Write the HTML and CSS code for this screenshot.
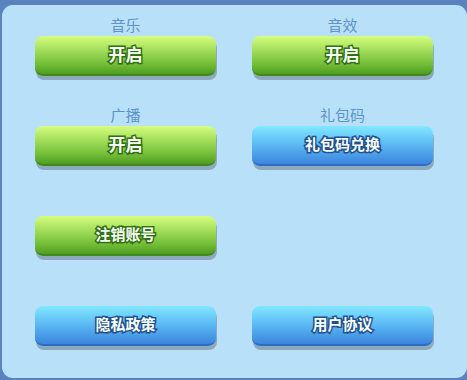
FILE: index.html
```html
<!DOCTYPE html>
<html lang="zh">
<head>
<meta charset="utf-8">
<link rel="stylesheet" href="styles.css">
</head>
<body>
<div class="panel">
  <div class="grid">
    <div class="cell"><div class="label">音乐</div><div class="btn green big">开启</div></div>
    <div class="cell"><div class="label">音效</div><div class="btn green big">开启</div></div>
    <div class="cell"><div class="label">广播</div><div class="btn green big">开启</div></div>
    <div class="cell"><div class="label">礼包码</div><div class="btn blue">礼包码兑换</div></div>
    <div class="cell"><div class="label"></div><div class="btn green">注销账号</div></div>
    <div class="cell"></div>
    <div class="cell"><div class="label"></div><div class="btn blue">隐私政策</div></div>
    <div class="cell"><div class="label"></div><div class="btn blue">用户协议</div></div>
  </div>
</div>
</body>
</html>
```
FILE: styles.css
```css
html, body {
  margin: 0;
  padding: 0;
}
body {
  width: 467px;
  height: 380px;
  background: #5a82bf;
  overflow: hidden;
  font-family: "Noto Sans CJK SC", "Noto Sans", sans-serif;
}
.panel {
  margin: 5px 0 0 2px;
  width: 465px;
  height: 373px;
  box-sizing: border-box;
  background: #b8e1f9;
  border-radius: 11px;
  padding: 11px 0 0 33px;
}
.grid {
  display: grid;
  grid-template-columns: 181px 181px;
  column-gap: 36px;
  row-gap: 30px;
}
.cell {
  display: flex;
  flex-direction: column;
  align-items: stretch;
  height: 60px;
}
.label {
  height: 20px;
  line-height: 17px;
  text-align: center;
  font-size: 15px;
  color: #5f93c8;
}
.btn {
  height: 40px;
  border-radius: 8px;
  box-sizing: border-box;
  display: flex;
  align-items: center;
  justify-content: center;
  color: #f6fff2;
  font-weight: bold;
  font-size: 15px;
  padding-bottom: 3px;
  paint-order: stroke fill;
}
.green {
  background: linear-gradient(to bottom, #d6fd80 0%, #a6e05c 35%, #72bd36 75%, #4f9c22 100%);
  border-bottom: 2px solid #3f8b1a;
  box-shadow: 1px 4px 0 #8ea9bd;
  -webkit-text-stroke: 3px #336f16;
}
.blue {
  background: linear-gradient(to bottom, #82e8ff 0%, #62c2f6 40%, #4b9ee8 75%, #3c86de 100%);
  border-bottom: 2px solid #2e6cc4;
  box-shadow: 1px 4px 0 #8ea9bd;
  -webkit-text-stroke: 3px #224f90;
}
.big {
  font-size: 17px;
}
```
